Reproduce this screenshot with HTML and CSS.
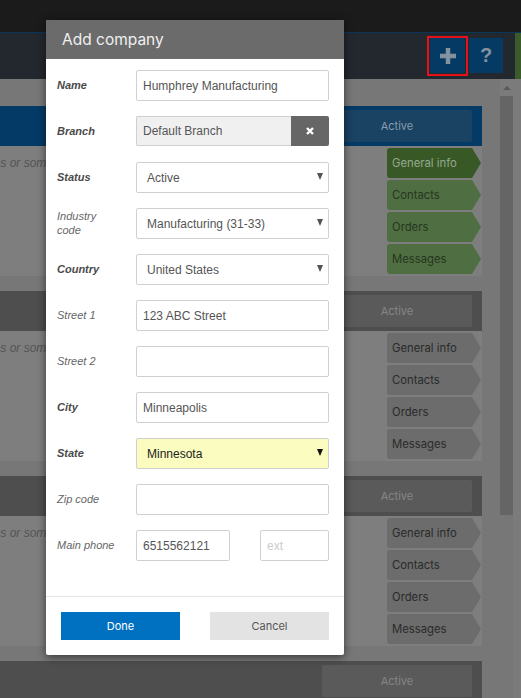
FILE: index.html
```html
<!DOCTYPE html>
<html lang="en">
<head>
<meta charset="utf-8">
<title>Add company</title>
<link rel="stylesheet" href="styles.css">
</head>
<body>
<div class="topbar"></div>
<header class="appbar">
  <div class="appbar-actions">
    <button class="hbtn" type="button" aria-label="Add">
      <svg width="16" height="16" viewBox="0 0 16 16"><rect x="5.75" y="0" width="4.5" height="16" fill="currentColor"/><rect x="0" y="5.75" width="16" height="4.5" fill="currentColor"/></svg>
    </button>
    <button class="hbtn hbtn-help" type="button" aria-label="Help">?</button>
  </div>
  <div class="appbar-strip"></div>
</header>
<div class="highlight"></div>

<div class="main">
  <div class="content">
    <section class="company company-active">
      <div class="company-head"><span class="pill">Active</span></div>
      <div class="company-body">
        <p class="note">Notes or some description</p>
        <nav class="tabs">
          <a class="tab tab-current">General info</a>
          <a class="tab">Contacts</a>
          <a class="tab">Orders</a>
          <a class="tab">Messages</a>
        </nav>
      </div>
    </section>
    <section class="company">
      <div class="company-head"><span class="pill">Active</span></div>
      <div class="company-body">
        <p class="note">Notes or some description</p>
        <nav class="tabs">
          <a class="tab">General info</a>
          <a class="tab">Contacts</a>
          <a class="tab">Orders</a>
          <a class="tab">Messages</a>
        </nav>
      </div>
    </section>
    <section class="company">
      <div class="company-head"><span class="pill">Active</span></div>
      <div class="company-body">
        <p class="note">Notes or some description</p>
        <nav class="tabs">
          <a class="tab">General info</a>
          <a class="tab">Contacts</a>
          <a class="tab">Orders</a>
          <a class="tab">Messages</a>
        </nav>
      </div>
    </section>
    <section class="company">
      <div class="company-head"><span class="pill">Active</span></div>
      <div class="company-body">
        <p class="note">Notes or some description</p>
      </div>
    </section>
  </div>
  <div class="scrollbar">
    <div class="scroll-up"><span class="scroll-arrow"></span></div>
    <div class="scroll-thumb"></div>
  </div>
  <div class="side-strip"></div>
</div>

<div class="modal" role="dialog" aria-label="Add company">
  <div class="modal-title">Add company</div>
  <form class="modal-form">
    <label class="lbl req">Name</label>
    <div class="field">Humphrey Manufacturing</div>

    <label class="lbl req">Branch</label>
    <div class="field-group">
      <div class="field field-ro">Default Branch</div>
      <button class="clear-btn" type="button" aria-label="Clear">
        <svg width="8" height="8" viewBox="0 0 8 8"><path d="M1 1 L7 7 M7 1 L1 7" stroke="#fff" stroke-width="2.4" stroke-linecap="butt"/></svg>
      </button>
    </div>

    <label class="lbl req">Status</label>
    <div class="field select"><span>Active</span><i class="caret"></i></div>

    <label class="lbl">Industry code</label>
    <div class="field select"><span>Manufacturing (31-33)</span><i class="caret"></i></div>

    <label class="lbl req">Country</label>
    <div class="field select"><span>United States</span><i class="caret"></i></div>

    <label class="lbl">Street 1</label>
    <div class="field">123 ABC Street</div>

    <label class="lbl">Street 2</label>
    <div class="field"></div>

    <label class="lbl req">City</label>
    <div class="field">Minneapolis</div>

    <label class="lbl req">State</label>
    <div class="field select select-hl"><span>Minnesota</span><i class="caret caret-dark"></i></div>

    <label class="lbl">Zip code</label>
    <div class="field"></div>

    <label class="lbl">Main phone</label>
    <div class="phone-row">
      <div class="field field-phone">6515562121</div>
      <div class="field field-ext placeholder">ext</div>
    </div>
  </form>
  <div class="modal-footer">
    <button class="btn btn-primary" type="button">Done</button>
    <button class="btn btn-secondary" type="button">Cancel</button>
  </div>
</div>
</body>
</html>
```
FILE: styles.css
```css
* { box-sizing: border-box; }
html, body { margin: 0; padding: 0; }
body {
  width: 521px;
  height: 698px;
  overflow: hidden;
  background: #777777;
  font-family: "Liberation Sans", Arial, sans-serif;
  position: relative;
}

.topbar {
  height: 33px;
  background: #1b1b1b;
  border-bottom: 1px solid #0a365c;
}

.appbar {
  height: 46px;
  background: #23282e;
  display: flex;
  justify-content: flex-end;
  align-items: flex-start;
}
.appbar-actions {
  display: flex;
  gap: 4px;
  padding-top: 5px;
  margin-right: 12px;
}
.hbtn {
  width: 35px;
  height: 35px;
  border: 0;
  padding: 0;
  background: #053a64;
  color: #84929f;
  display: flex;
  align-items: center;
  justify-content: center;
  font-family: "Liberation Sans", Arial, sans-serif;
  font-weight: bold;
  font-size: 20px;
}
.hbtn-help { width: 34px; }
.appbar-strip {
  width: 6px;
  height: 46px;
  background: #3a5b2c;
}
.highlight {
  position: absolute;
  left: 427px;
  top: 36px;
  width: 41px;
  height: 40px;
  border: 2px solid #e6121a;
}

.main {
  display: flex;
  height: 619px;
}
.content {
  width: 500px;
  padding: 27px 18px 0 0;
  overflow: hidden;
}
.company {
  margin-bottom: 15px;
}
.company-head {
  height: 40px;
  background: #4e4e4e;
  display: flex;
  justify-content: flex-end;
  align-items: center;
  padding-right: 10px;
}
.pill {
  width: 150px;
  height: 32px;
  border-radius: 2px;
  background: #5a5a5a;
  color: #868686;
  font-family: Inter, "Noto Sans", sans-serif;
  font-size: 11px;
  display: flex;
  align-items: center;
  justify-content: center;
}
.company-active .company-head { background: #033a66; }
.company-active .pill { background: #1a4262; color: #879cae; }

.company-body {
  height: 130px;
  background: #7e7e7e;
  display: flex;
  justify-content: space-between;
  align-items: flex-start;
}
.note {
  margin: 10px 0 0 -25px;
  font-style: italic;
  font-size: 12px;
  color: #545454;
  white-space: nowrap;
}
.tabs {
  width: 95px;
  padding-top: 2px;
  display: flex;
  flex-direction: column;
  gap: 2px;
}
.tab {
  width: 94px;
  height: 30px;
  padding-left: 5px;
  display: flex;
  align-items: center;
  background: #6c6c6c;
  color: #2a2a2a;
  font-family: Inter, "Noto Sans", sans-serif;
  font-size: 11.3px;
  border-radius: 3px 0 0 3px;
  clip-path: polygon(0 0, calc(100% - 9px) 0, 100% 50%, calc(100% - 9px) 100%, 0 100%);
}
.company-active .tab { background: #4f6f42; color: #27351f; }
.company-active .tab-current { background: #385826; color: #97a98f; }

.scrollbar {
  width: 13px;
  display: flex;
  flex-direction: column;
}
.scroll-up {
  height: 17px;
  display: flex;
  justify-content: center;
  align-items: center;
  background: #7b7b7b;
}
.scroll-arrow {
  width: 0;
  height: 0;
  border-left: 4px solid transparent;
  border-right: 4px solid transparent;
  border-bottom: 4px solid #5a5a5a;
}
.scroll-thumb {
  height: 419px;
  background: #656565;
}
.side-strip {
  width: 8px;
  background: #7b7b7b;
}

/* Modal */
.modal {
  position: absolute;
  left: 46px;
  top: 20px;
  width: 298px;
  background: #ffffff;
  box-shadow: 0 2px 8px rgba(0, 0, 0, 0.55);
  border-radius: 0 0 2px 2px;
}
.modal-title {
  height: 39px;
  background: #6b6b6b;
  color: #efefef;
  font-family: Inter, "Noto Sans", sans-serif;
  font-size: 15.5px;
  padding-left: 16px;
  display: flex;
  align-items: center;
}
.modal-form {
  display: grid;
  grid-template-columns: 79px 1fr;
  grid-auto-rows: 31px;
  row-gap: 15px;
  padding: 11px 15px 35px 11px;
  margin: 0;
}
.lbl {
  align-self: center;
  font-style: italic;
  font-size: 11px;
  line-height: 14px;
  color: #666666;
  padding-bottom: 2px;
  padding-right: 20px;
}
.lbl.req { font-weight: bold; color: #4a4a4a; }

.field {
  height: 31px;
  border: 1px solid #d0d0d0;
  border-radius: 2px;
  padding: 0 6px;
  display: flex;
  align-items: center;
  font-size: 12px;
  color: #555555;
  background: #fff;
}
.field-group {
  display: flex;
}
.field-ro {
  flex: 1;
  background: #f0f0f0;
  border-right: 0;
  border-radius: 2px 0 0 2px;
  height: 30px;
}
.clear-btn {
  width: 38px;
  height: 30px;
  border: 0;
  padding: 0;
  background: #666666;
  border-radius: 0 2px 2px 0;
  display: flex;
  align-items: center;
  justify-content: center;
}
.select {
  padding-left: 10px;
  justify-content: space-between;
  padding-right: 5px;
}
.caret {
  width: 0;
  height: 0;
  border-left: 3.5px solid transparent;
  border-right: 3.5px solid transparent;
  border-top: 7px solid #555;
  margin-bottom: 2px;
}
.caret-dark { border-top-color: #111; }
.select-hl { background: #fafcc0; color: #222; }
.phone-row {
  display: flex;
  justify-content: space-between;
}
.field-phone { width: 94px; }
.field-ext { width: 69px; }
.placeholder { color: #cccccc; }

.modal-footer {
  border-top: 1px solid #e6e6e6;
  padding: 15px;
  display: flex;
  justify-content: space-between;
}
.btn {
  width: 119px;
  height: 28px;
  border: 0;
  padding: 0;
  font-family: Inter, "Noto Sans", sans-serif;
  font-size: 11px;
}
.btn-primary { background: #0071c1; color: #ffffff; }
.btn-secondary { background: #e3e3e3; color: #555555; }
```
